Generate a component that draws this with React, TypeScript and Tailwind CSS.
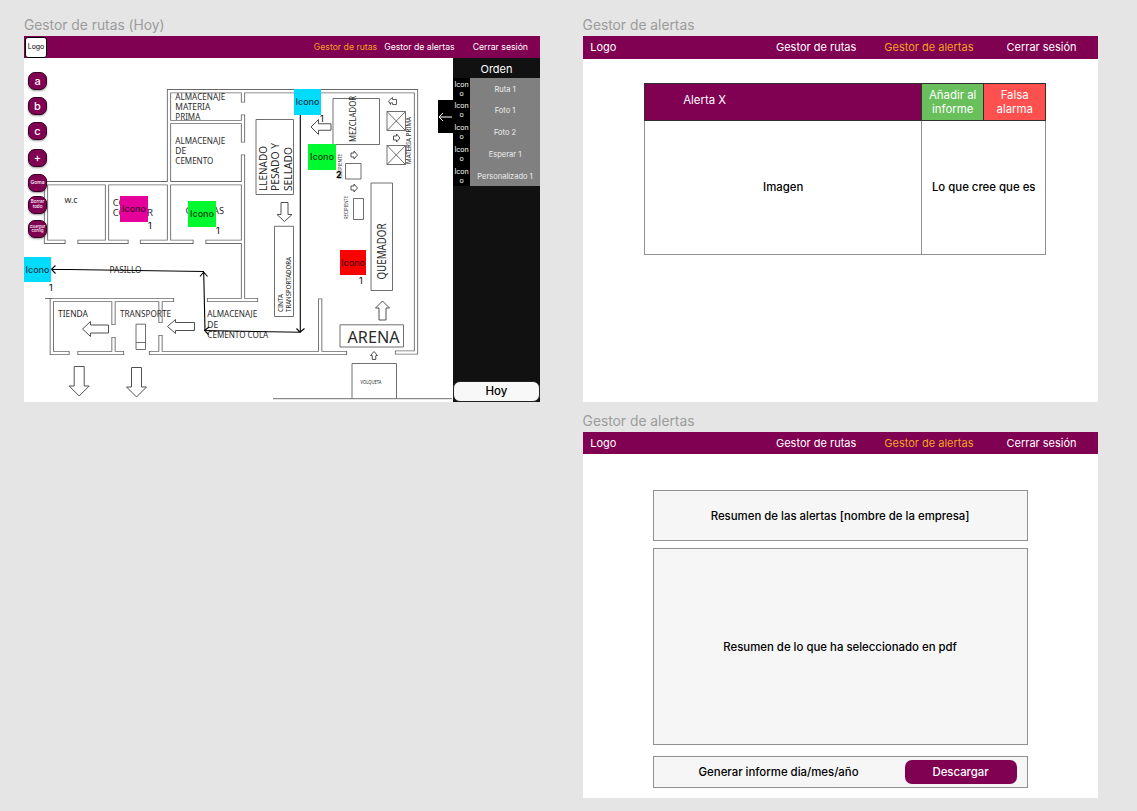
import React from "react";

const WALLS = [
  "M169 238V91.200H416V352.500H397",
  "M243 93V100.500M243 116.500V140.500M243 156.500V300H256M243 300H209",
  "M171 122H241M48 183.200H241",
  "M46 185V241.800H63.500M79.500 241.800H126.500M142 241.800H191.500M207.500 241.800H241",
  "M107 185V240M169 185V240",
  "M51.800 300H172M51.800 300V353H67.500M79.500 353H122M151 353H345",
  "M113.500 302V323M113.500 339V351M160.500 302V321M160.500 337V351M320.200 300.500V351",
].join("");

type BlockArrow = { x: number; y: number; a: number; l: number; w: number; h: number; s: number };

const ARROWS: BlockArrow[] = [
  { x: 82.5, y: 329, a: 180, l: 26, w: 15, h: 8, s: 8 },
  { x: 167.5, y: 326.5, a: 180, l: 27, w: 14, h: 8, s: 8 },
  { x: 79.2, y: 396, a: 90, l: 29.5, w: 20, h: 10, s: 10 },
  { x: 136.5, y: 397, a: 90, l: 29.5, w: 20, h: 10, s: 10 },
  { x: 284.5, y: 221.5, a: 90, l: 19, w: 15, h: 7, s: 7 },
  { x: 311, y: 127, a: 180, l: 20, w: 15, h: 7.5, s: 6.5 },
  { x: 382.5, y: 301, a: -90, l: 19, w: 14, h: 7, s: 7 },
  { x: 374, y: 351.5, a: -90, l: 8, w: 7, h: 4, s: 3.5 },
  { x: 357.5, y: 155, a: 0, l: 6.5, w: 8, h: 3.5, s: 4 },
  { x: 357.5, y: 188, a: 0, l: 6.5, w: 8, h: 3.5, s: 4 },
  { x: 400, y: 138, a: 0, l: 6.5, w: 8, h: 3.5, s: 4 },
];

function arrowPath({ l, w, h, s }: BlockArrow) {
  return `M0 0L${-h} ${-w / 2}V${-s / 2}H${-l}V${s / 2}H${-h}V${w / 2}Z`;
}

type Label = { t: string; x: number; y: number; size: number; len: number; up?: boolean };

const LABELS: Label[] = [
  { t: "ALMACENAJE", x: 175.3, y: 100, size: 9.8, len: 50 },
  { t: "MATERIA", x: 175.3, y: 110.2, size: 9.8, len: 35 },
  { t: "PRIMA", x: 175.3, y: 120.2, size: 9.8, len: 25 },
  { t: "ALMACENAJE", x: 175.3, y: 143.8, size: 9.8, len: 50 },
  { t: "DE", x: 175.3, y: 154, size: 9.8, len: 11 },
  { t: "CEMENTO", x: 175.3, y: 164, size: 9.8, len: 38 },
  { t: "w.c", x: 64.5, y: 203, size: 8.5, len: 13 },
  { t: "CO", x: 112.7, y: 205.5, size: 9.8, len: 13 },
  { t: "CO", x: 112.7, y: 215.5, size: 9.8, len: 13 },
  { t: "R", x: 147, y: 215.5, size: 9.8, len: 6 },
  { t: "C", x: 185.5, y: 214, size: 9.8, len: 6 },
  { t: "AS", x: 213, y: 214, size: 9.8, len: 11 },
  { t: "PASILLO", x: 109.5, y: 273, size: 9.8, len: 32 },
  { t: "TIENDA", x: 58, y: 317.3, size: 9.8, len: 30 },
  { t: "TRANSPORTE", x: 120, y: 317.3, size: 9.8, len: 51 },
  { t: "ALMACENAJE", x: 207.3, y: 317.3, size: 9.8, len: 50 },
  { t: "DE", x: 207.3, y: 327.8, size: 9.8, len: 11 },
  { t: "CEMENTO COLA", x: 207.3, y: 337.5, size: 9.8, len: 61 },
  { t: "ARENA", x: 347.5, y: 343, size: 17, len: 52 },
  { t: "VOLQUETA", x: 360.5, y: 384, size: 4.5, len: 21 },
  { t: "LLENADO", x: 267, y: 191, size: 11.5, len: 45, up: true },
  { t: "PESADO Y", x: 279.3, y: 191, size: 11.5, len: 48, up: true },
  { t: "SELLADO", x: 292, y: 191, size: 11.5, len: 44, up: true },
  { t: "MEZCLADOR", x: 356, y: 142, size: 9.8, len: 46, up: true },
  { t: "MATERIA PRIMA", x: 410.5, y: 164, size: 7.5, len: 47, up: true },
  { t: "QUEMADOR", x: 385.5, y: 279.5, size: 11.8, len: 56, up: true },
  { t: "CINTA", x: 283, y: 312, size: 7, len: 18, up: true },
  { t: "TRANSPORTADORA", x: 291, y: 312, size: 7, len: 55, up: true },
  { t: "RECIPIENTE", x: 341.5, y: 179, size: 4.5, len: 25, up: true },
  { t: "RECIPIENTE", x: 348, y: 219, size: 4.5, len: 23, up: true },
];

function FloorPlan() {
  return (
    <svg viewBox="24 58 429 344" className="block h-full w-full" fontFamily="'Noto Sans', sans-serif">
      <path d={WALLS} fill="none" stroke="#686868" strokeWidth="4.2" strokeLinecap="square" />
      <path d={WALLS} fill="none" stroke="#fff" strokeWidth="2.4" strokeLinecap="square" />
      <path
        d="M45 298.500H52M273 398.700H452M256 119.500H293.500V194.500H256ZM274.500 226.300H293.500V316.500H274.500ZM333 98.500H379.500V144.500H333ZM387 111.500H405.500V130.500H387ZL405.500 130.500M405.500 111.500L387 130.500M387 145.500H405.500V164.500H387ZL405.500 164.500M405.500 145.500L387 164.500M345.500 163.500H361V179H345.500ZM353.500 198.500H363.500V219.500H353.500ZM371 183H392.500V290.500H371ZM340 324.800H403.500V347H340ZM352 398.500V363.500H396.500V398.500M136 324.200H145.500V349.500H136ZM136 342.500H145.500"
        fill="none"
        stroke="#606060"
        strokeWidth="0.9"
      />
      {ARROWS.map((a, i) => (
        <path
          key={i}
          d={arrowPath(a)}
          transform={`translate(${a.x} ${a.y}) rotate(${a.a})`}
          fill="#fff"
          stroke="#505050"
          strokeWidth="1"
        />
      ))}
      <path d="M388.500 101L392.500 97.500V99.500H396.500V104.500H392.500V102.800H390.500V104.500Z" fill="#fff" stroke="#505050" strokeWidth="0.9" />
      {LABELS.map((l, i) => (
        <text
          key={i}
          x={l.up ? 0 : l.x}
          y={l.up ? 0 : l.y}
          transform={l.up ? `translate(${l.x} ${l.y}) rotate(-90)` : undefined}
          fontSize={l.size}
          textLength={l.len}
          lengthAdjust="spacingAndGlyphs"
          fill="#2a2a2a"
        >
          {l.t}
        </text>
      ))}
      <g fill="none" stroke="#000" strokeWidth="1.1">
        <path d="M300.3 114V332" />
        <path d="M296.500 328.500L300 332.200L304.500 328.500M301 332.300L204 330.500M209 327L204.500 330.500L208.500 334.500" />
        <path d="M205 330.500L203.700 272M200 276.500L203.700 272L207.500 276.500M204 271.500L51.500 269.300M55.500 265.500L51.500 269.300L55.500 273.500" />
      </g>
    </svg>
  );
}

type Sticker = { place: string; box: string; number: string; value: string };

const STICKERS: Sticker[] = [
  { place: "left-[270px] top-[31px]", box: "h-[26px] w-[27px] bg-[#00dcff]", number: "left-[26px] top-[23px]", value: "1" },
  { place: "left-[284px] top-[86px]", box: "h-[26px] w-[28px] bg-[#00f92f]", number: "left-[28px] top-[24px] font-bold", value: "2" },
  { place: "left-[96px] top-[138px]", box: "h-[26px] w-[28px] bg-[#e6009b]", number: "left-[28px] top-[23px]", value: "1" },
  { place: "left-[164px] top-[143px]", box: "h-[26px] w-[28px] bg-[#00f92f]", number: "left-[28px] top-[23px]", value: "1" },
  { place: "left-[316px] top-[192px]", box: "h-[25px] w-[26px] bg-[#ff0000]", number: "left-[19px] top-[24px]", value: "1" },
  { place: "left-0 top-[199px]", box: "h-[25px] w-[27px] bg-[#00dcff]", number: "left-[25px] top-[24px]", value: "1" },
];

const TOOLS = [
  { label: "a", cls: "mt-[14px] text-[11px]" },
  { label: "b", cls: "mt-[7px] text-[11px]" },
  { label: "c", cls: "mt-[7px] text-[11px]" },
  { label: "+", cls: "mt-[9px] text-[11px]" },
  { label: "Goma", cls: "mt-[7px] text-[5px]" },
  { label: "Borrar todo", cls: "mt-[4px] text-[4.5px]" },
  { label: "Guardar config", cls: "mt-[6px] text-[4px]" },
];

const ORDER = [
  { name: "Ruta 1", h: "h-[21px]" },
  { name: "Foto 1", h: "h-[22px]" },
  { name: "Foto 2", h: "h-[22px]" },
  { name: "Esperar 1", h: "h-[22px]" },
  { name: "Personalizado 1", h: "h-[21px]" },
];

function RoutesBoard() {
  return (
    <section className="w-[516px]">
      <h2 className="flex h-[36px] items-end whitespace-nowrap text-[13.8px] leading-[21px] text-[#9c9c9c]">Gestor de rutas (Hoy)</h2>
      <div className="flex h-[366px] flex-col bg-white">
        <header className="flex h-[22px] shrink-0 items-center bg-[#800052] pl-[1px] text-[8.7px] text-white">
          <div className="flex h-[21px] w-[22px] items-center justify-center rounded-[3px] border border-black bg-white pt-px text-[7px] text-black">Logo</div>
          <nav className="ml-auto flex whitespace-nowrap pr-[12px] pt-[2px]">
            <span className="mr-[7px] text-[#f3a320]">Gestor de rutas</span>
            <span className="mr-[18px]">Gestor de alertas</span>
            <span>Cerrar sesión</span>
          </nav>
        </header>
        <div className="flex h-[344px]">
          <div className="relative w-[429px]">
            <FloorPlan />
            {STICKERS.map((s) => (
              <div key={s.place} className={`absolute ${s.place}`}>
                <div className={`flex items-center justify-center text-[9px] font-medium text-black/80 ${s.box}`}>Icono</div>
                <span className={`absolute text-[9px] leading-[14px] text-black ${s.number}`}>{s.value}</span>
              </div>
            ))}
            <div className="absolute left-[4px] top-0 flex flex-col">
              {TOOLS.map((t) => (
                <button key={t.label} className={`flex h-[18px] w-[19px] items-center justify-center rounded-[7px] border border-[#390025] bg-[#800052] text-center font-medium leading-[1.1] text-white shadow-[0_1px_2px_rgba(0,0,0,0.4)] ${t.cls}`}>
                  {t.label}
                </button>
              ))}
            </div>
            <div className="absolute right-0 top-[42px] flex h-[33px] w-[15px] items-center bg-black">
              <svg viewBox="0 0 15 10" className="w-[15px]" fill="none" stroke="#fff" strokeWidth="1"><path d="M14 5H1M5 1L1 5L5 9" /></svg>
            </div>
          </div>
          <aside className="flex w-[87px] flex-col bg-[#111] text-white">
            <h3 className="flex h-[20px] shrink-0 items-center justify-center pt-[2px] text-[11px]">Orden</h3>
            {ORDER.map((o) => (
              <div key={o.name} className={`flex shrink-0 ${o.h}`}>
                <div className="w-[17px] bg-black pt-[3px] text-center text-[7px] leading-[8.5px]">Icon<br />o</div>
                <div className="flex flex-1 items-center justify-center whitespace-nowrap bg-[#808080] pt-[2px] text-[7.5px] text-[#eee]">{o.name}</div>
              </div>
            ))}
            <div className="mt-auto flex h-[21px] items-center justify-center rounded-[7px] border border-[#222] bg-[#f8f8f8] text-[11.5px] font-medium text-black">Hoy</div>
          </aside>
        </div>
      </div>
    </section>
  );
}

function AlertsHeader() {
  return (
    <header className="flex h-[22.5px] shrink-0 items-center whitespace-nowrap bg-[#800052] pl-[7.6px] pr-[21px] text-[11px] text-white">
      <span>Logo</span>
      <nav className="ml-auto flex">
        <span className="mr-[28px]">Gestor de rutas</span>
        <span className="mr-[33px] text-[#f3a320]">Gestor de alertas</span>
        <span>Cerrar sesión</span>
      </nav>
    </header>
  );
}

function AlertDetail() {
  return (
    <section>
      <h2 className="flex h-[36px] items-end whitespace-nowrap text-[13.8px] leading-[21px] text-[#9c9c9c]">Gestor de alertas</h2>
      <div className="h-[366px] bg-white">
        <AlertsHeader />
        <div className="ml-[61.6px] mt-[24px] w-[402px] text-[11.4px] font-medium text-black">
          <div className="flex h-[38px] border border-[#303030] font-normal text-white">
            <div className="flex w-[276px] items-center bg-[#800052] pb-px pl-[38px]">Alerta X</div>
            <button className="w-[63px] whitespace-nowrap border-x border-[#303030] bg-[#68bf5c] pt-px text-center leading-[14px]">Añadir al<br />informe</button>
            <button className="flex-1 bg-[#ff5050] pt-px text-center leading-[14px]">Falsa<br />alarma</button>
          </div>
          <div className="flex h-[134px] border border-t-0 border-[#909090]">
            <div className="flex w-[276px] items-center justify-center pt-[2px]">Imagen</div>
            <div className="flex flex-1 items-center justify-center border-l border-[#909090] pt-[2px]">Lo que cree que es</div>
          </div>
        </div>
      </div>
    </section>
  );
}

function AlertSummary() {
  return (
    <section>
      <h2 className="flex h-[29.5px] items-end whitespace-nowrap text-[13.8px] leading-[21px] text-[#9c9c9c]">Gestor de alertas</h2>
      <div className="h-[366px] bg-white">
        <AlertsHeader />
        <div className="ml-[70px] mt-[36px] flex w-[375px] flex-col text-[11.4px] font-medium text-black">
          <div className="flex h-[51px] items-center justify-center border border-[#909090] bg-[#f6f6f6] pt-[2px]">Resumen de las alertas [nombre de la empresa]</div>
          <div className="mt-[7px] flex h-[197px] items-center justify-center border border-[#909090] bg-[#f6f6f6] pt-[2px]">Resumen de lo que ha seleccionado en pdf</div>
          <div className="mt-[11px] flex h-[32px] items-center justify-between border border-[#909090] bg-[#f6f6f6] pl-[45px] pr-[10px]">
            <span className="pt-[2px]">Generar informe dia/mes/año</span>
            <button className="h-[24px] w-[112px] rounded-[7px] bg-[#800052] pt-[2px] text-white">Descargar</button>
          </div>
        </div>
      </div>
    </section>
  );
}

export default function App() {
  return (
    <main className="flex h-[811px] w-[1137px] overflow-hidden bg-[#e5e5e5] pl-[24px] font-['Inter',sans-serif]">
      <RoutesBoard />
      <div className="ml-[42.6px] w-[515px]">
        <AlertDetail />
        <AlertSummary />
      </div>
    </main>
  );
}
